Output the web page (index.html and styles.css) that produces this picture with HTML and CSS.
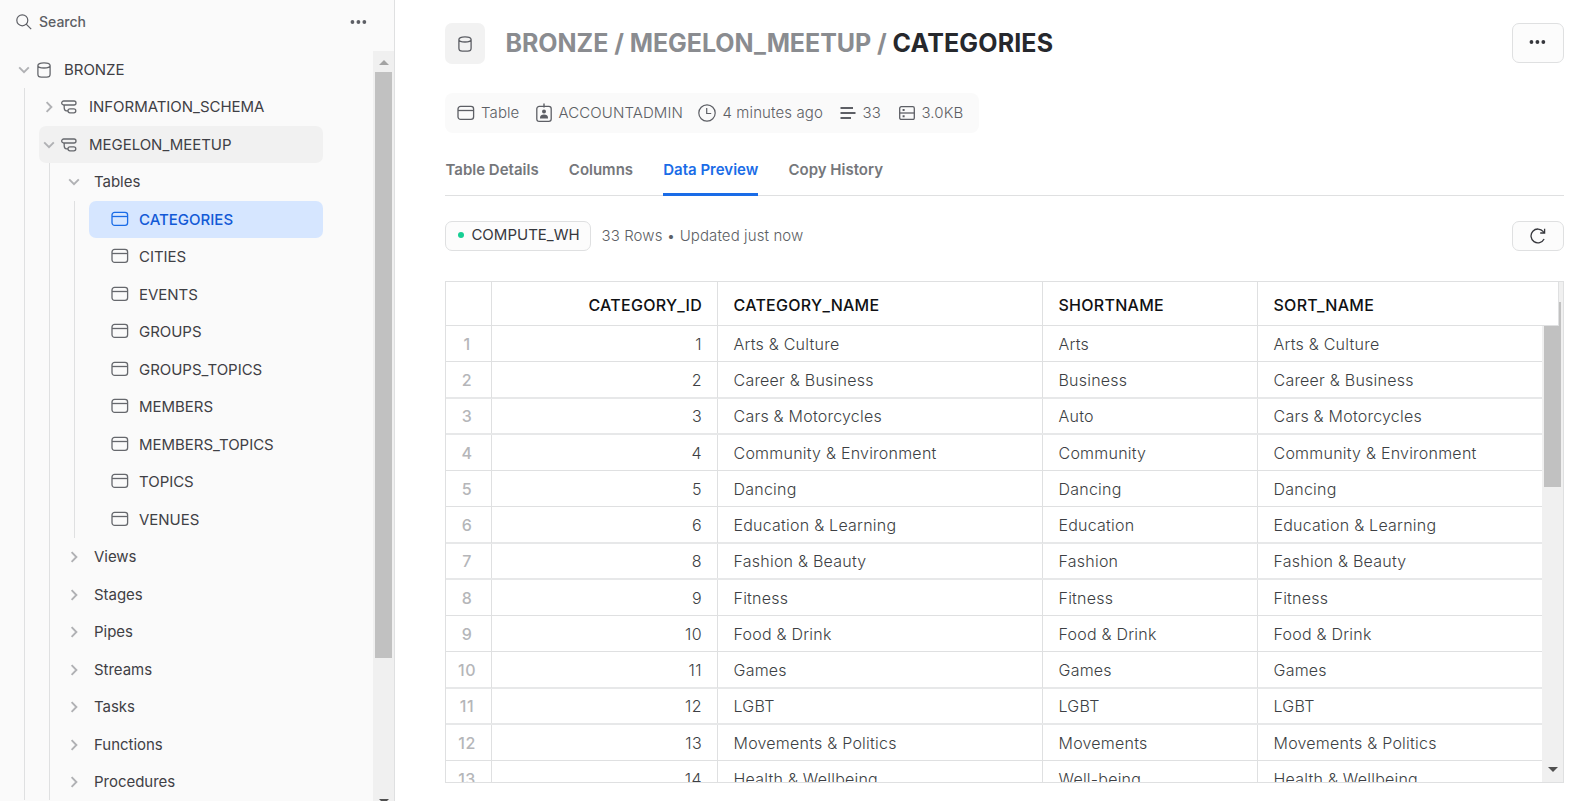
FILE: index.html
```html
<!DOCTYPE html>
<html lang="en">
<head>
<meta charset="utf-8">
<title>BRONZE / MEGELON_MEETUP / CATEGORIES</title>
<link rel="stylesheet" href="styles.css">
</head>
<body>
<svg class="defs" width="0" height="0">
  <symbol id="i-down" viewBox="0 0 12 12"><path d="M1.200 3.400 6 8.200 10.800 3.400" fill="none" stroke="currentColor" stroke-width="1.900"/></symbol>
  <symbol id="i-right" viewBox="0 0 12 12"><path d="M3.600 1.200 8.400 6 3.600 10.800" fill="none" stroke="currentColor" stroke-width="1.900"/></symbol>
  <symbol id="i-db" viewBox="0 0 14 16"><path d="M.900 3.600v8.600c0 1.500 1.400 2.900 3.400 2.900h5.400c2 0 3.400-1.400 3.400-2.900V3.600M.900 3.600C.900 1.900 3 .800 7 .800s6.100 1.100 6.100 2.800S11 6 7 6 .900 5.300.900 3.600Z" fill="none" stroke="currentColor" stroke-width="1.300"/></symbol>
  <symbol id="i-schema" viewBox="0 0 16 14"><g fill="none" stroke="currentColor" stroke-width="1.300"><rect x=".700" y="1" width="14.300" height="4" rx="2"/><rect x="7" y="8.800" width="7.800" height="4" rx="2"/><path d="M3.200 5v2.800c0 2 1 3 2.300 3h1.500"/></g></symbol>
  <symbol id="i-table" viewBox="0 0 18 16"><g fill="none" stroke="currentColor" stroke-width="1.300"><rect x="1" y="1.400" width="15.600" height="13" rx="2.600"/><path d="M1 5.500h15.600"/></g></symbol>
  <symbol id="i-dots" viewBox="0 0 18 6"><g fill="currentColor"><circle cx="2.600" cy="3" r="2"/><circle cx="8.900" cy="3" r="2"/><circle cx="15.200" cy="3" r="2"/></g></symbol>
</svg>
<div class="app">
  <aside class="sidebar">
    <div class="search">
      <svg class="search-icon" viewBox="0 0 16 16"><g fill="none" stroke="currentColor" stroke-width="1.200"><circle cx="6.300" cy="6.300" r="5.500"/><path d="m10.200 10.200 5 5"/></g></svg>
      <span class="search-label">Search</span>
      <svg class="dots"><use href="#i-dots"/></svg>
    </div>
    <div class="tree-pane">
      <div class="tree">
        <div class="node"><svg class="chev"><use href="#i-down"/></svg><svg class="db"><use href="#i-db"/></svg><span>BRONZE</span></div>
        <div class="branch">
          <div class="node"><svg class="chev"><use href="#i-right"/></svg><svg class="schema"><use href="#i-schema"/></svg><span>INFORMATION_SCHEMA</span></div>
          <div class="node current"><svg class="chev"><use href="#i-down"/></svg><svg class="schema"><use href="#i-schema"/></svg><span>MEGELON_MEETUP</span></div>
          <div class="branch">
            <div class="node group"><svg class="chev"><use href="#i-down"/></svg><span>Tables</span></div>
            <div class="branch">
              <div class="node leaf selected"><svg class="tbl"><use href="#i-table"/></svg><span>CATEGORIES</span></div>
              <div class="node leaf"><svg class="tbl"><use href="#i-table"/></svg><span>CITIES</span></div>
              <div class="node leaf"><svg class="tbl"><use href="#i-table"/></svg><span>EVENTS</span></div>
              <div class="node leaf"><svg class="tbl"><use href="#i-table"/></svg><span>GROUPS</span></div>
              <div class="node leaf"><svg class="tbl"><use href="#i-table"/></svg><span>GROUPS_TOPICS</span></div>
              <div class="node leaf"><svg class="tbl"><use href="#i-table"/></svg><span>MEMBERS</span></div>
              <div class="node leaf"><svg class="tbl"><use href="#i-table"/></svg><span>MEMBERS_TOPICS</span></div>
              <div class="node leaf"><svg class="tbl"><use href="#i-table"/></svg><span>TOPICS</span></div>
              <div class="node leaf"><svg class="tbl"><use href="#i-table"/></svg><span>VENUES</span></div>
            </div>
            <div class="node group"><svg class="chev"><use href="#i-right"/></svg><span>Views</span></div>
            <div class="node group"><svg class="chev"><use href="#i-right"/></svg><span>Stages</span></div>
            <div class="node group"><svg class="chev"><use href="#i-right"/></svg><span>Pipes</span></div>
            <div class="node group"><svg class="chev"><use href="#i-right"/></svg><span>Streams</span></div>
            <div class="node group"><svg class="chev"><use href="#i-right"/></svg><span>Tasks</span></div>
            <div class="node group"><svg class="chev"><use href="#i-right"/></svg><span>Functions</span></div>
            <div class="node group"><svg class="chev"><use href="#i-right"/></svg><span>Procedures</span></div>
          </div>
        </div>
      </div>
      <div class="scrollbar tree-scroll">
        <svg class="arrow up" viewBox="0 0 10 6"><path d="M5 0 10 5H0Z"/></svg>
        <div class="thumb"></div>
        <svg class="arrow down" viewBox="0 0 10 6"><path d="M0 0h10L5 5Z"/></svg>
      </div>
    </div>
  </aside>

  <main class="main">
    <header class="header">
      <div class="header-icon"><svg class="db"><use href="#i-db"/></svg></div>
      <h1 class="title"><span class="path">BRONZE / MEGELON_MEETUP / </span>CATEGORIES</h1>
      <button class="btn more"><svg class="dots"><use href="#i-dots"/></svg></button>
    </header>

    <div class="meta">
      <div class="meta-item type"><svg class="tbl"><use href="#i-table"/></svg><span>Table</span></div>
      <div class="meta-item role"><svg class="badge" viewBox="0 0 16 20"><rect x=".800" y="3.400" width="14.400" height="15" rx="2.400" fill="none" stroke="currentColor" stroke-width="1.300"/><path d="M8 .500v4" stroke="currentColor" stroke-width="1.400"/><circle cx="8" cy="8.400" r="2" fill="currentColor"/><path d="M4 15.400v-1c0-1.800 1.700-2.900 4-2.900s4 1.100 4 2.900v1Z" fill="currentColor"/></svg><span>ACCOUNTADMIN</span></div>
      <div class="meta-item age"><svg class="clock" viewBox="0 0 18 18"><g fill="none" stroke="currentColor" stroke-width="1.200"><circle cx="9" cy="9" r="8.200"/><path d="M8.700 4v5.500h4.500"/></g></svg><span>4 minutes ago</span></div>
      <div class="meta-item rows"><svg class="lines" viewBox="0 0 16 14"><path d="M.500 2h12.500M.500 7h15M.500 12h10.500" stroke="currentColor" stroke-width="2"/></svg><span>33</span></div>
      <div class="meta-item size"><svg class="server" viewBox="0 0 16 14"><g fill="none" stroke="currentColor" stroke-width="1.300"><rect x=".700" y=".700" width="14.600" height="12.800" rx="1.600"/><path d="M.700 7h14.600"/></g><path d="M3.600 2.900h2v2h-2zM3.600 9.300h2v2h-2z" fill="currentColor"/></svg><span>3.0KB</span></div>
    </div>

    <nav class="tabs">
      <span class="tab">Table Details</span>
      <span class="tab">Columns</span>
      <span class="tab active">Data Preview</span>
      <span class="tab">Copy History</span>
    </nav>

    <div class="status">
      <button class="btn warehouse"><i class="dot"></i>COMPUTE_WH</button>
      <span class="status-text">33 Rows • Updated just now</span>
      <button class="btn refresh"><svg viewBox="0 0 16 16"><path d="M14.100 11A6.900 6.900 0 1 1 13.300 3.600L14.600 5M14.600.800V5H10.200" fill="none" stroke="currentColor" stroke-width="1.300"/></svg></button>
    </div>

    <section class="grid">
      <div class="row head"><span></span><span class="num">CATEGORY_ID</span><span>CATEGORY_NAME</span><span>SHORTNAME</span><span>SORT_NAME</span></div>
      <div class="body">
        <div class="row"><span>1</span><span class="num">1</span><span>Arts &amp; Culture</span><span>Arts</span><span>Arts &amp; Culture</span></div>
        <div class="row"><span>2</span><span class="num">2</span><span>Career &amp; Business</span><span>Business</span><span>Career &amp; Business</span></div>
        <div class="row"><span>3</span><span class="num">3</span><span>Cars &amp; Motorcycles</span><span>Auto</span><span>Cars &amp; Motorcycles</span></div>
        <div class="row"><span>4</span><span class="num">4</span><span>Community &amp; Environment</span><span>Community</span><span>Community &amp; Environment</span></div>
        <div class="row"><span>5</span><span class="num">5</span><span>Dancing</span><span>Dancing</span><span>Dancing</span></div>
        <div class="row"><span>6</span><span class="num">6</span><span>Education &amp; Learning</span><span>Education</span><span>Education &amp; Learning</span></div>
        <div class="row"><span>7</span><span class="num">8</span><span>Fashion &amp; Beauty</span><span>Fashion</span><span>Fashion &amp; Beauty</span></div>
        <div class="row"><span>8</span><span class="num">9</span><span>Fitness</span><span>Fitness</span><span>Fitness</span></div>
        <div class="row"><span>9</span><span class="num">10</span><span>Food &amp; Drink</span><span>Food &amp; Drink</span><span>Food &amp; Drink</span></div>
        <div class="row"><span>10</span><span class="num">11</span><span>Games</span><span>Games</span><span>Games</span></div>
        <div class="row"><span>11</span><span class="num">12</span><span>LGBT</span><span>LGBT</span><span>LGBT</span></div>
        <div class="row"><span>12</span><span class="num">13</span><span>Movements &amp; Politics</span><span>Movements</span><span>Movements &amp; Politics</span></div>
        <div class="row"><span>13</span><span class="num">14</span><span>Health &amp; Wellbeing</span><span>Well-being</span><span>Health &amp; Wellbeing</span></div>
      </div>
      <div class="scrollbar grid-scroll">
        <div class="thumb"></div>
        <svg class="arrow down" viewBox="0 0 10 6"><path d="M0 0h10L5 5Z"/></svg>
      </div>
    </section>
  </main>
</div>
</body>
</html>
```

FILE: styles.css
```css
* { box-sizing: border-box; }
body { margin: 0; font-family: Inter, "Liberation Sans", sans-serif; font-size: 15px; color: #3f4045; background: #fff; }
.defs { display: block; position: absolute; }
svg { display: block; flex: none; }
.app { display: flex; height: 801px; overflow: hidden; }

/* Sidebar */
.sidebar { width: 395px; flex: none; display: flex; flex-direction: column; background: #fafafa; border-right: 1px solid #dfe0e1; }
.search { height: 51px; flex: none; display: flex; align-items: center; padding: 0 27.500px 8px 16px; color: #5d5f65; }
.search-icon { width: 16px; height: 16px; }
.search-label { flex: 1; padding-left: 7px; font-size: 14px; font-weight: 500; }
.dots { width: 17px; height: 6px; }
.tree-pane { flex: 1; min-height: 0; display: flex; }
.tree { flex: 1; padding-right: 50px; padding-left: 14px; overflow: hidden; }
.node { height: 37px; display: flex; align-items: center; white-space: nowrap; border-radius: 7px; letter-spacing: -.03px; }
/* rows advance 37.5px on average: every second one carries the extra pixel */
.branch > .node:nth-child(odd) { margin-bottom: 1px; }
.branch > .leaf:nth-child(odd) { margin-bottom: 0; }
.branch > .leaf:nth-child(even) { margin-bottom: 1px; }
.branch { margin-left: 10px; padding-left: 14px; border-left: 1px solid #dfe0e1; }
.node svg { color: #66686d; }
.node .chev { width: 12px; height: 12px; margin-left: 4px; color: #b0b1b4; }
.node .db { margin: 0 13px 0 7px; }
.db { width: 14px; height: 16px; }
.node .schema { width: 16px; height: 14px; margin: 0 12px 0 6px; }
.group span { padding-left: 14px; }
.tbl { width: 18px; height: 16px; }
.leaf .tbl { margin: 0 10px 2px 22px; }
.current { background: #f1f1f1; }
.selected { background: #d6e6ff; color: #1259d6; font-weight: 500; letter-spacing: 0; }
.node.selected svg { color: #1a6ce7; }

/* Scrollbars */
.scrollbar { display: flex; flex-direction: column; align-items: center; background: #f0f0f0; }
.scrollbar .thumb { width: 17px; flex: none; background: #c1c1c1; }
.arrow { width: 10px; height: 6px; fill: #505050; }
.tree-scroll { width: 21px; overflow: hidden; }
.tree-scroll .up { margin: 9px 0 6px; fill: #a3a3a3; }
.tree-scroll .thumb { height: 586px; }
.tree-scroll .down { margin-top: 141px; }

/* Main column */
.main { flex: 1; min-width: 0; padding: 23px 16px 0 50px; display: flex; flex-direction: column; }
.header { height: 41px; display: flex; align-items: flex-start; }
.header-icon { width: 40px; height: 41px; border-radius: 7px; background: #f2f2f2; color: #5d5f65; display: flex; align-items: center; justify-content: center; }
.title { margin: 0; padding-left: 20.500px; flex: 1; font-size: 25px; line-height: 40px; font-weight: 700; color: #26282d; white-space: pre; letter-spacing: .15px; }
.path { color: #8a8c90; letter-spacing: -.050px; }
.btn { font: inherit; color: #36373c; background: #fcfcfc; border: 1px solid #dfe0e1; border-radius: 7px; padding: 0; display: flex; align-items: center; justify-content: center; }
.more { width: 52px; height: 40px; padding: 0 1px 2px 0; }
.meta { align-self: flex-start; height: 40px; width: 534px; margin-top: 29px; padding-left: 11.500px; display: flex; align-items: center; border-radius: 8px; background: #fafafa; color: #5d5f65; font-weight: 300; letter-spacing: .1px; white-space: nowrap; }
.meta-item { display: flex; align-items: center; gap: 6.500px; }
.meta-item span { padding-bottom: 2px; }
.type { width: 79.500px; }
.role { width: 162px; }
.age { width: 142px; }
.rows { width: 59px; }
.badge { width: 16px; height: 20px; }
.clock { width: 18px; height: 18px; }
.lines, .server { width: 16px; height: 14px; }

.tabs { height: 49px; margin-top: 14px; padding-left: .500px; display: flex; gap: 30.200px; border-bottom: 1px solid #dfe0e1; font-weight: 600; color: #75777b; white-space: nowrap; flex: none; line-height: 45px; }
.tab { height: 49px; }
.tab.active { color: #1a6ce7; border-bottom: 3px solid #1a6ce7; }

.status { height: 30px; margin-top: 25px; display: flex; align-items: stretch; }
.warehouse { width: 146px; padding: 0 0 3px 2px; }
.dot { width: 6px; height: 6px; border-radius: 50%; background: #16cf94; margin: 1px 7px 0 0; }
.status-text { flex: 1; padding-left: 10.500px; line-height: 30px; color: #5d5f65; font-weight: 300; letter-spacing: .1px; }
.refresh { width: 52px; padding-bottom: 1px; }
.refresh svg { width: 16px; height: 16px; }

/* Data grid */
.grid { height: 502px; margin-top: 30px; flex: none; display: grid; grid-template: 44px 1fr / 1fr 21px; border: 1px solid #dfe0e1; }
.row { display: grid; grid-template-columns: 46px 226px 325px 215px 1fr; height: 36px; line-height: 36px; border-bottom: 1px solid #dfe0e1; font-size: 16px; white-space: nowrap; }
.row span { padding-left: 15.500px; border-right: 1px solid #dfe0e1; }
.row span:last-child { border-right: 0; }
.row .num { text-align: right; padding: 0 15px 0 0; }
.body { grid-area: 2 / 1; overflow: hidden; color: #3d3f44; font-weight: 300; letter-spacing: .23px; }
.body .row span:first-child { text-align: center; padding: 0 3px 0 0; color: #b5b6b9; font-weight: 500; letter-spacing: .5px; }
.body .num { letter-spacing: .4px; }
.body .row:nth-child(4n+2), .body .row:nth-child(4n+3) { border-bottom: 2px solid #e7e8e9; }
.body .row:nth-child(4n+2) { height: 37px; }
.body .row:nth-child(4n+3) { line-height: 34px; }
.head { grid-area: 1 / 1; height: 44px; line-height: 47px; margin-right: -17px; background: #fff; border-right: 1px solid #dfe0e1; color: #101114; font-weight: 500; letter-spacing: .27px; z-index: 1; }
.grid-scroll { grid-area: 1 / 2 / 3 / 3; padding-top: 20px; align-items: center; }
.grid-scroll .thumb { height: 185px; }
.grid-scroll .down { margin-top: auto; margin-bottom: 9px; }
```
